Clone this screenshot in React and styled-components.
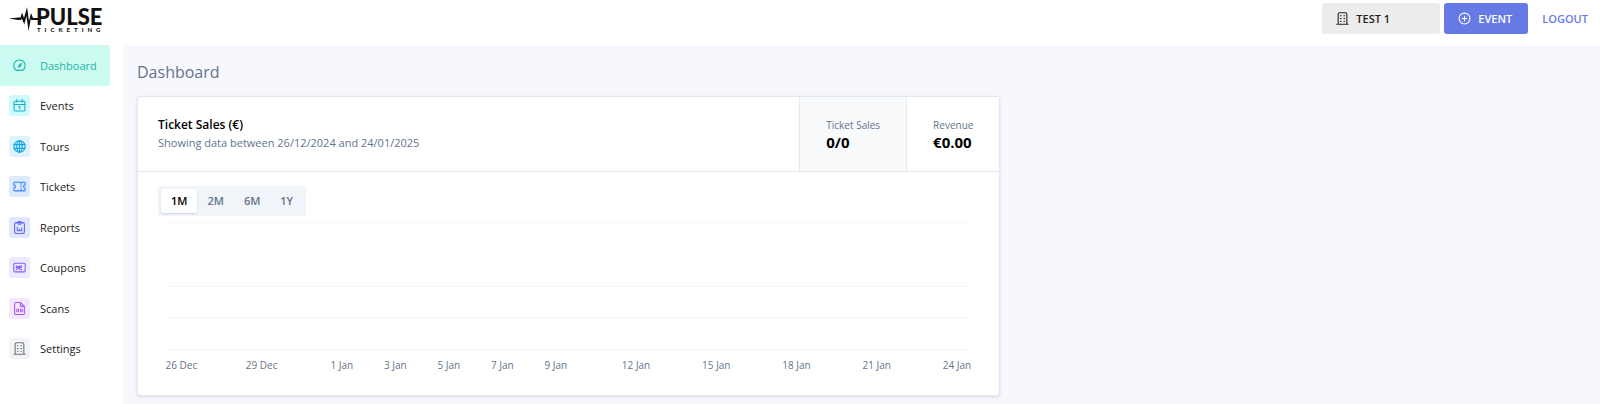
import React, { useState } from "react";
import styled, { createGlobalStyle } from "styled-components";

const Global = createGlobalStyle`
  *, *::before, *::after { box-sizing: border-box; }
  body { margin: 0; background: #fff; color: #000; font-family: "Segoe UI", "Open Sans", "Noto Sans", sans-serif; font-size: 11px; }
  button { font: inherit; }
  h1, h2, p, dl, dd, dt, ul { margin: 0; padding: 0; }
`;

const Page = styled.div`
  display: flex;
  flex-direction: column;
  min-height: 100vh;
`;
const Header = styled.header`
  display: flex;
  align-items: center;
  justify-content: space-between;
  height: 45px;
  padding: 0 12px 8px 9px;
`;
const LogoLink = styled.a`
  display: block;
  height: 30px;
  margin-top: 6px;
`;
const Actions = styled.div`
  display: flex;
  align-items: center;
  gap: 4px;
  font-weight: 600;
`;
const Account = styled.button`
  display: flex;
  align-items: center;
  gap: 7px;
  width: 118px;
  height: 31px;
  padding: 0 14px;
  border: 0;
  border-radius: 3px;
  background: #ececec;
  color: #222;
  font-size: 11px;
  font-weight: 600;
`;
const EventButton = styled(Account)`
  width: 84px;
  background: #667ae6;
  color: #fff;
`;
const Logout = styled.a`
  margin-left: 10px;
  color: #667ae6;
  font-size: 11px;
  text-decoration: none;
`;
const Body = styled.div`
  display: flex;
  flex: 1;
`;
const Sidebar = styled.nav`
  flex: 0 0 123px;
  padding-right: 13px;
`;
const NavList = styled.ul`
  display: grid;
  grid-auto-rows: 1fr;
  height: 324px;
  list-style: none;
`;
const NavItem = styled.a`
  display: flex;
  align-items: center;
  gap: 10px;
  height: 100%;
  padding-left: 9px;
  border-radius: 0 3px 3px 0;
  background: ${(p) => (p.$active ? "#ccfbf1" : "transparent")};
  color: ${(p) => (p.$active ? "#23b5a2" : "#1c1c1c")};
  text-decoration: none;
`;
const IconTile = styled.span`
  display: grid;
  place-items: center;
  width: 21px;
  height: 21px;
  border-radius: 3px;
  background: ${(p) => p.$bg};
  color: ${(p) => p.$fg};
`;
const Main = styled.main`
  flex: 1;
  padding: 15px 14px 14px;
  background: #f7f8fe;
`;
const Title = styled.h1`
  margin-bottom: 12px;
  color: #64748b;
  font-size: 16px;
  font-weight: 500;
  line-height: 24px;
`;
const Widgets = styled.div`
  display: grid;
  grid-template-columns: 3fr 2fr;
  gap: 10px;
`;
const Card = styled.section`
  border: 1px solid #e2e8f0;
  border-radius: 3px;
  background: #fff;
  box-shadow: 0 1px 3px rgba(15, 23, 42, 0.12);
`;
const CardHeader = styled.div`
  display: flex;
  height: 75px;
  border-bottom: 1px solid #e2e8f0;
`;
const Heading = styled.div`
  flex: 1;
  padding: 18px 20px;
`;
const CardTitle = styled.h2`
  font-size: 12px;
  font-weight: 600;
  line-height: 19px;
`;
const Subtitle = styled.p`
  color: #64748b;
  line-height: 18px;
`;
const Stats = styled.dl`
  display: flex;
`;
const Stat = styled.div`
  padding: 20px 26px;
  border-left: 1px solid #e2e8f0;
  background: ${(p) => (p.$active ? "#f8fafc" : "#fff")};
`;
const StatLabel = styled.dt`
  color: #64748b;
  font-size: 10px;
  line-height: 16px;
`;
const StatValue = styled.dd`
  font-size: 15px;
  font-weight: 700;
  line-height: 18px;
`;
const CardBody = styled.div`
  padding: 14px 20px 22px;
`;
const Ranges = styled.div`
  display: inline-flex;
  height: 30px;
  padding: 3px;
  background: #f1f5f9;
`;
const Range = styled.button`
  padding: 0 10px 1px;
  border: 0;
  border-radius: 2px;
  background: ${(p) => (p.$active ? "#fff" : "transparent")};
  box-shadow: ${(p) => (p.$active ? "0 1px 2px rgba(15, 23, 42, 0.16)" : "none")};
  color: ${(p) => (p.$active ? "#000" : "#64748b")};
  font-weight: 600;
`;
const Chart = styled.div`
  padding: 6px 9px 0 10px;
`;
const Plot = styled.div`
  display: grid;
  grid-template-rows: 64px 31px 32px;
  border-top: 1px solid #f5f6f8;
`;
const Band = styled.div`
  border-bottom: 1px solid #f3f4f6;
`;
const Axis = styled.div`
  display: grid;
  grid-template-columns: repeat(30, minmax(0, 1fr));
  margin-top: 7px;
  color: #64748b;
  font-size: 10px;
  line-height: 16px;
`;
const Tick = styled.span`
  grid-column: ${(p) => p.$day};
  justify-self: center;
  white-space: nowrap;
`;

const Icon = ({ size = 13, children }) => (
  <svg width={size} height={size} viewBox="0 0 24 24" fill="none" stroke="currentColor" strokeWidth="2" strokeLinecap="round" strokeLinejoin="round" aria-hidden="true">
    {children}
  </svg>
);
const BuildingShape = (
  <>
    <path d="M1.500 22.500h21M4 22V4a2.500 2.500 0 0 1 2.500-2.500h11A2.500 2.500 0 0 1 20 4v18" />
    <path d="M8 7h1.500M14.500 7H16M8 12h1.500M14.500 12H16M8 17h1.500M14.500 17H16" />
  </>
);

const Logo = () => (
  <svg width="104" height="30" viewBox="0 0 104 30" overflow="visible" role="img" aria-label="Pulse Ticketing">
    <path d="M0 11.500 9 10.500 11.500 10.500 13 5.500 15 11 18 0 20 14 22 6 24 11H29V13H22.500L21.800 12 19.600 24 17.400 9 15.300 17.500 12.800 11.500 12 13 9 13Z" fill="#111" />
    <text x="27" y="18" fontFamily="Lato, sans-serif" fontSize="22" fontWeight="900" fill="#111">PULSE</text>
    <text x="28" y="25" fontFamily="Lato, sans-serif" fontSize="6" fontWeight="900" fill="#111" letterSpacing="4">TICKETING</text>
  </svg>
);

const NAV = [
  { label: "Dashboard", bg: "transparent", fg: "#14b8a6", icon: <><path d="M6 21a10.500 10.500 0 1 1 12 0z" /><path d="m9.500 15.500 1.500-4.500 5.500-3.500-2.500 6z" fill="currentColor" strokeWidth="1" /></> },
  { label: "Events", bg: "#cffafe", fg: "#1bb0cb", icon: <><rect x="2" y="4" width="20" height="18" rx="2" /><path d="M7 1v5M17 1v5M2 10h20M11 14h1.500v4" /></> },
  { label: "Tours", bg: "#e0f2fe", fg: "#0ea5e9", icon: <><circle cx="12" cy="12" r="10.500" /><ellipse cx="12" cy="12" rx="5" ry="10.500" /><path d="M2 8.500h20M2 15.500h20M12 1.500v21" /></> },
  { label: "Tickets", bg: "#dbeafe", fg: "#3b82f6", icon: <><path d="M3 4h18a1.500 1.500 0 0 1 1.500 1.500V9a3 3 0 0 0 0 6v3.500A1.500 1.500 0 0 1 21 20H3a1.500 1.500 0 0 1-1.500-1.500V15a3 3 0 0 0 0-6V5.500A1.500 1.500 0 0 1 3 4z" /><path d="M15 5v3M15 11v2M15 16v3" /></> },
  { label: "Reports", bg: "#e0e7ff", fg: "#6366f1", icon: <><rect x="3" y="3" width="18" height="20" rx="3" /><path d="M8 3.500 10 1h4l2 2.500L14 6h-4z" /><path d="M8 11.500V18h8v-5M12 15.500V18" /></> },
  { label: "Coupons", bg: "#ede9fe", fg: "#8b5cf6", icon: <><rect x="1.500" y="4" width="21" height="16" rx="2" /><path d="M6 9l3 3 3-3 3 3 1-3M6 16l3-3 3 2 4 1M6 12h8" /></> },
  { label: "Scans", bg: "#f3e8ff", fg: "#a855f7", icon: <><path d="M14 1H5a2 2 0 0 0-2 2v18a2 2 0 0 0 2 2h14a2 2 0 0 0 2-2V8zV8h7" /><path d="M7 13v5M10 13v5M14 13v5M17 13v5" /></> },
  { label: "Settings", bg: "#f3f4f6", fg: "#6b7280", icon: BuildingShape },
];
const TICKS = [[1, "26 Dec"], [4, "29 Dec"], [7, "1 Jan"], [9, "3 Jan"], [11, "5 Jan"], [13, "7 Jan"], [15, "9 Jan"], [18, "12 Jan"], [21, "15 Jan"], [24, "18 Jan"], [27, "21 Jan"], [30, "24 Jan"]];

export default function App() {
  const [range, setRange] = useState("1M");
  return (
    <Page>
      <Global />
      <Header>
        <LogoLink href="#"><Logo /></LogoLink>
        <Actions>
          <Account type="button"><Icon>{BuildingShape}</Icon>TEST 1</Account>
          <EventButton type="button"><Icon><circle cx="12" cy="12" r="10" /><path d="M12 8v8M8 12h8" /></Icon>EVENT</EventButton>
          <Logout href="#">LOGOUT</Logout>
        </Actions>
      </Header>
      <Body>
        <Sidebar aria-label="Main">
          <NavList>
            {NAV.map((n, i) => (
              <li key={n.label}>
                <NavItem href="#" $active={i === 0} aria-current={i === 0 ? "page" : undefined}>
                  <IconTile $bg={n.bg} $fg={n.fg}><Icon>{n.icon}</Icon></IconTile>
                  {n.label}
                </NavItem>
              </li>
            ))}
          </NavList>
        </Sidebar>
        <Main>
          <Title>Dashboard</Title>
          <Widgets>
            <Card>
              <CardHeader>
                <Heading>
                  <CardTitle>Ticket Sales (€)</CardTitle>
                  <Subtitle>Showing data between 26/12/2024 and 24/01/2025</Subtitle>
                </Heading>
                <Stats>
                  <Stat $active><StatLabel>Ticket Sales</StatLabel><StatValue>0/0</StatValue></Stat>
                  <Stat><StatLabel>Revenue</StatLabel><StatValue>€0.00</StatValue></Stat>
                </Stats>
              </CardHeader>
              <CardBody>
                <Ranges role="group" aria-label="Period">
                  {["1M", "2M", "6M", "1Y"].map((r) => (
                    <Range key={r} type="button" $active={r === range} aria-pressed={r === range} onClick={() => setRange(r)}>{r}</Range>
                  ))}
                </Ranges>
                <Chart>
                  <Plot><Band /><Band /><Band /></Plot>
                  <Axis>{TICKS.map(([day, label]) => <Tick key={label} $day={day}>{label}</Tick>)}</Axis>
                </Chart>
              </CardBody>
            </Card>
          </Widgets>
        </Main>
      </Body>
    </Page>
  );
}
